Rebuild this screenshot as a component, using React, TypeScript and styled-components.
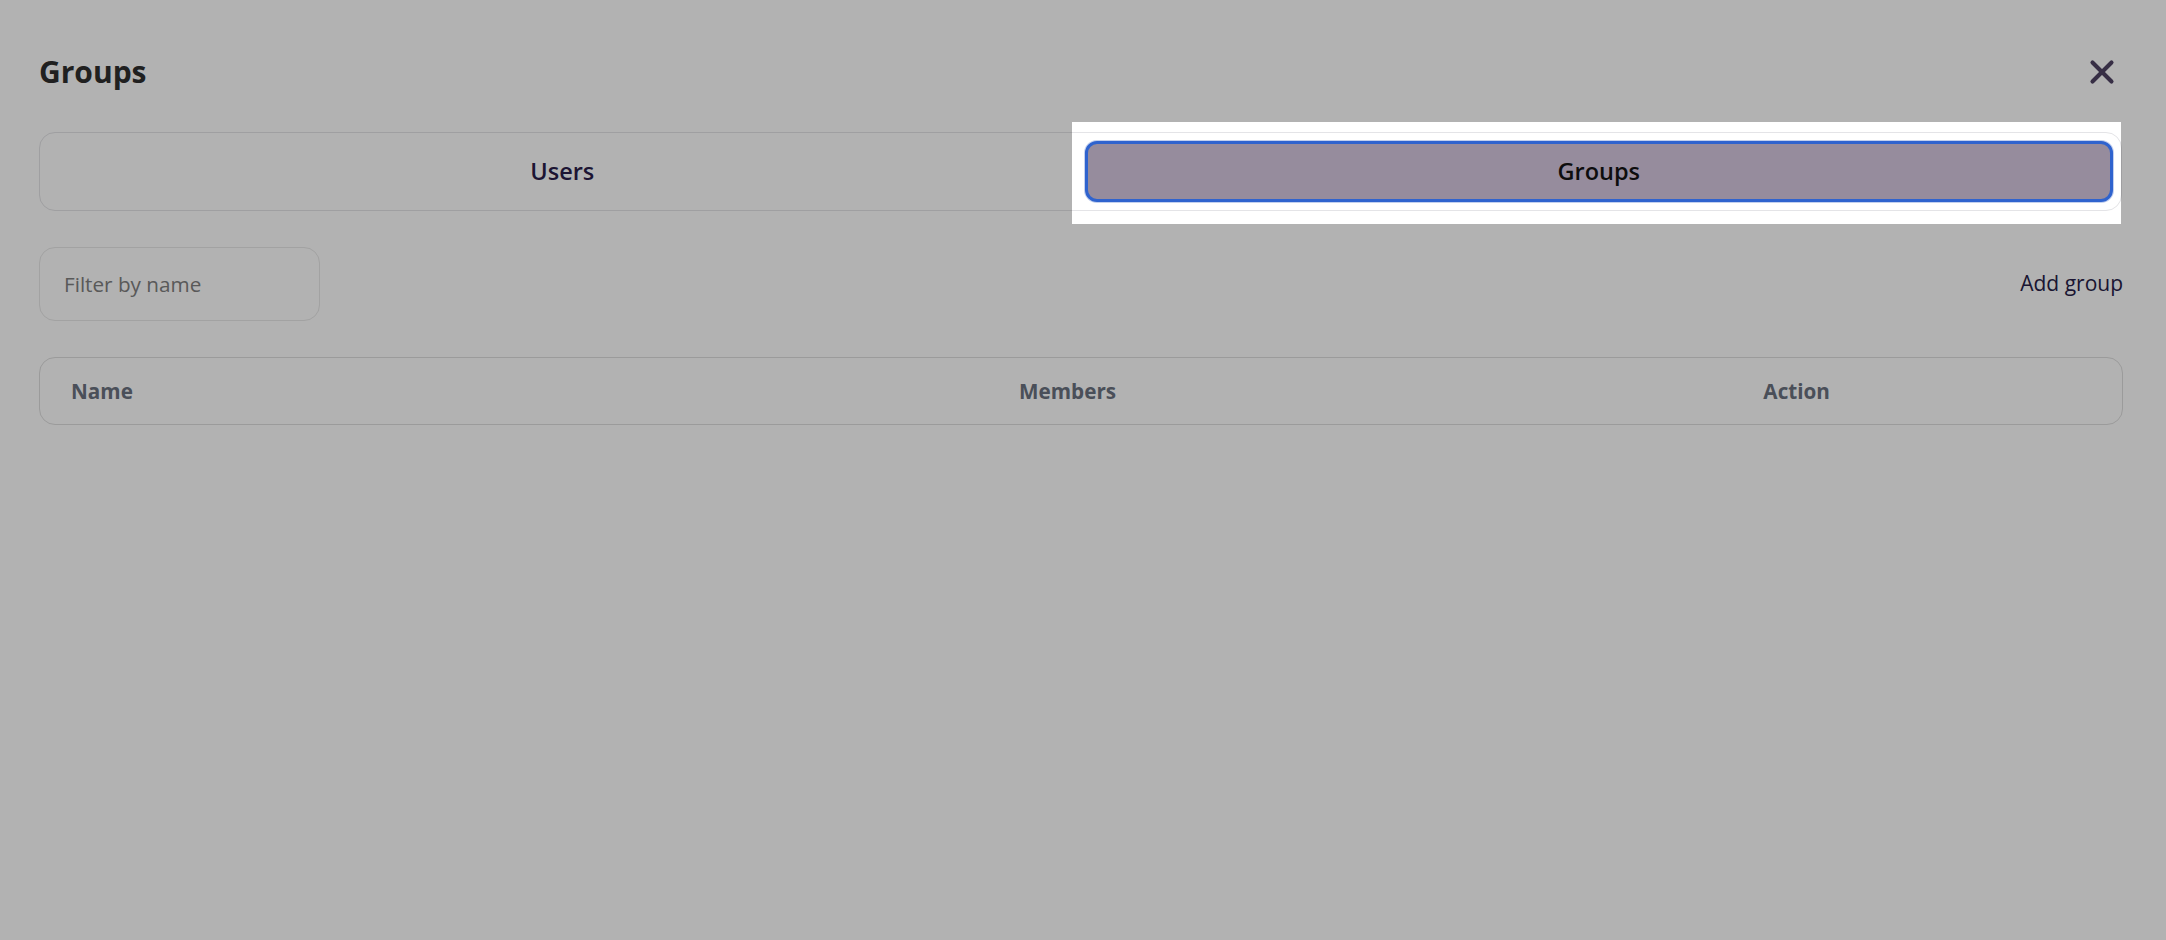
import React from "react";
import styled, { createGlobalStyle } from "styled-components";
import { X } from "lucide-react";

const GlobalStyle = createGlobalStyle`
  html, body {
    margin: 0;
    padding: 0;
    background: #ffffff;
  }
  body {
    font-family: "Open Sans", "Noto Sans", sans-serif;
  }
  * {
    box-sizing: border-box;
  }
`;

const columns = [
  { label: "Name", size: "949fr" },
  { label: "Members", size: "745fr" },
  { label: "Action", size: "390fr" },
];

const App = () => {
  return (
    <Page>
      <GlobalStyle />
      <Header>
        <Title>Groups</Title>
        <CloseButton aria-label="Close">
          <X size={38} strokeWidth={2.6} />
        </CloseButton>
      </Header>

      <Tabs>
        <Tab>Users</Tab>
        <Tab selected>
          Groups
          <Spotlight />
        </Tab>
      </Tabs>

      <Toolbar>
        <Filter placeholder="Filter by name" />
        <AddButton>Add group</AddButton>
      </Toolbar>

      <Table>
        <HeadRow cols={columns.map((c) => c.size).join(" ")}>
          {columns.map((c) => (
            <HeadCell key={c.label}>{c.label}</HeadCell>
          ))}
        </HeadRow>
      </Table>
    </Page>
  );
};

export default App;

const Page = styled.div`
  min-height: 100vh;
  padding: 52px 44px 0 39px;
  display: flex;
  flex-direction: column;
`;

const Header = styled.div`
  display: flex;
  align-items: center;
  justify-content: space-between;
  height: 40px;
`;

const Title = styled.h1`
  margin: 0;
  font-size: 30px;
  font-weight: 700;
  color: #2f2f2f;
  line-height: 40px;
`;

const CloseButton = styled.button`
  border: none;
  background: none;
  padding: 0;
  margin-right: 1px;
  display: flex;
  color: #4f4264;
  cursor: pointer;
`;

const Tabs = styled.div`
  margin-top: 40px;
  display: grid;
  grid-template-columns: 1fr 1fr;
  gap: 8px;
  padding: 8px;
  border: 1px solid #e4e4e7;
  border-radius: 16px;
  background: #ffffff;
`;

const Tab = styled.div<{ selected?: boolean }>`
  position: relative;
  height: 61px;
  display: flex;
  align-items: center;
  justify-content: center;
  padding-bottom: 2px;
  font-size: 23.5px;
  font-weight: 600;
  border-radius: 12px;
  color: ${(p) => (p.selected ? "#0d0d0d" : "#2a1d4a")};
  background: ${(p) => (p.selected ? "#968c9d" : "transparent")};
  border: 3px solid ${(p) => (p.selected ? "#2f63ce" : "transparent")};
  box-shadow: ${(p) => (p.selected ? "0 0 0 1px #c3d0ee" : "none")};
`;

const Spotlight = styled.span`
  position: absolute;
  top: -22px;
  right: -11px;
  bottom: -25px;
  left: -16px;
  box-shadow: 0 0 0 9999px rgba(0, 0, 0, 0.3);
  pointer-events: none;
  z-index: 1000;
`;

const Toolbar = styled.div`
  margin-top: 36px;
  display: flex;
  align-items: center;
  justify-content: space-between;
`;

const Filter = styled.input`
  width: 281px;
  height: 74px;
  padding: 0 24px;
  border: 1px solid #e8e8e8;
  border-radius: 16px;
  font-family: "Open Sans", "Noto Sans", sans-serif;
  font-size: 20.7px;
  color: #2f2f2f;
  outline: none;

  &::placeholder {
    color: #808080;
  }
`;

const AddButton = styled.button`
  border: none;
  background: none;
  padding: 0 0 2px;
  margin-right: -1px;
  font-family: "Open Sans", "Noto Sans", sans-serif;
  font-size: 21px;
  color: #281d48;
  cursor: pointer;
`;

const Table = styled.div`
  margin-top: 36px;
  border: 1px solid #dedede;
  border-radius: 16px;
  margin-right: -1px;
`;

const HeadRow = styled.div<{ cols: string }>`
  display: grid;
  grid-template-columns: ${(p) => p.cols};
  height: 66px;
  align-items: center;
`;

const HeadCell = styled.div`
  padding-left: 31px;
  font-size: 20.7px;
  font-weight: 700;
  color: #6b7280;
`;
